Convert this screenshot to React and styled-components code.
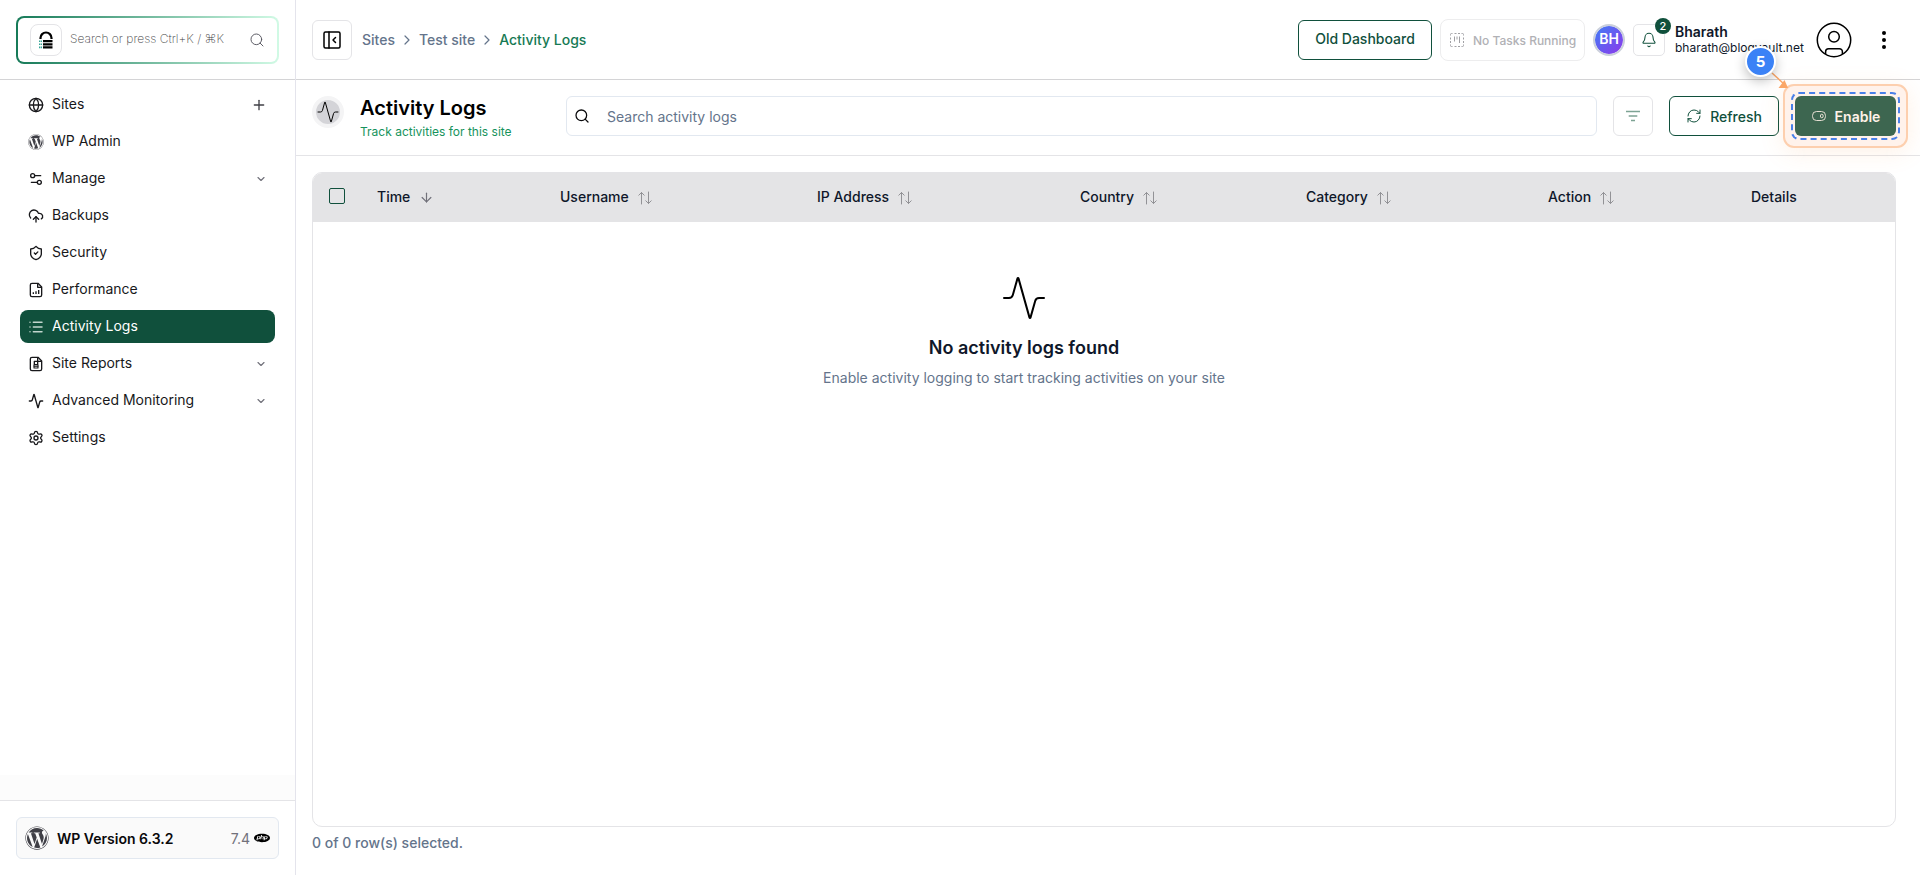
import React from "react";
import styled, { createGlobalStyle } from "styled-components";
import {
  Activity,
  ArrowDown,
  Bell,
  ChevronDown,
  ChevronRight,
  CloudUpload,
  Globe,
  List,
  Plus,
  RefreshCw,
  Search,
  Settings,
  Settings2,
} from "lucide-react";
import { FaWordpress } from "react-icons/fa";
import { SiPhp } from "react-icons/si";

const GlobalStyle = createGlobalStyle`
  * { box-sizing: border-box; }
  body {
    margin: 0;
    background: #fff;
    color: #09090b;
    font-family: Inter, "Liberation Sans", sans-serif;
    font-size: 14px;
  }
  button, input { font-family: inherit; }
  svg { display: block; flex-shrink: 0; }
`;

const menu = [
  { label: "Sites", icon: <Globe size={16} strokeWidth={2} />, end: "plus" },
  { label: "WP Admin", icon: <FaWordpress size={16} color="#3f3f46" /> },
  { label: "Manage", icon: <Settings2 size={16} strokeWidth={2} />, end: "chevron" },
  { label: "Backups", icon: <CloudUpload size={16} strokeWidth={2} /> },
  { label: "Security", icon: <ShieldIcon /> },
  { label: "Performance", icon: <ChartFileIcon /> },
  { label: "Activity Logs", icon: <List size={16} strokeWidth={2.2} color="#c3d6ce" />, active: true },
  { label: "Site Reports", icon: <ReportIcon />, end: "chevron" },
  { label: "Advanced Monitoring", icon: <Activity size={16} strokeWidth={2} />, end: "chevron" },
  { label: "Settings", icon: <GearIcon /> },
];

const columns = ["Username", "IP Address", "Country", "Category", "Action"];

function GearIcon() {
  return <Settings size={16} strokeWidth={2} />;
}

function ShieldIcon() {
  return (
    <svg width="16" height="16" viewBox="0 0 24 24" fill="none" stroke="currentColor" strokeWidth="2" strokeLinecap="round" strokeLinejoin="round">
      <path d="M20 13c0 5-3.500 7.500-8 9-4.500-1.500-8-4-8-9V6c3 0 6-1.500 8-4 2 2.500 5 4 8 4Z" />
      <path d="m9.500 12 1.800 1.800 3.500-3.500" />
    </svg>
  );
}

function ChartFileIcon() {
  return (
    <svg width="16" height="16" viewBox="0 0 24 24" fill="none" stroke="currentColor" strokeWidth="2" strokeLinejoin="round">
      <path d="M15 2H6a2.500 2.500 0 0 0-2.500 2.500v15A2.500 2.500 0 0 0 6 22h12a2.500 2.500 0 0 0 2.500-2.500V7.500Z" />
      <path d="M14.500 2v6h6M8 18v-2.500M12 18v-4M16 18v-6" />
    </svg>
  );
}

function ReportIcon() {
  return (
    <svg width="16" height="16" viewBox="0 0 24 24" fill="none" stroke="currentColor" strokeWidth="2" strokeLinejoin="round">
      <path d="M15 2H6a2.500 2.500 0 0 0-2.500 2.500v15A2.500 2.500 0 0 0 6 22h12a2.500 2.500 0 0 0 2.500-2.500V7.500Z" />
      <path d="M14.500 2v6h6" />
      <rect x="9.500" y="8" width="5" height="5" />
      <path d="M9 13v5h6v-5M8 15.500h8" strokeWidth="1.600" />
    </svg>
  );
}

function LockLogo() {
  return (
    <svg width="16" height="18" viewBox="0 0 16 18" fill="none">
      <path d="M2.500 8V7a5.500 5.500 0 0 1 11 0v1" stroke="#000" strokeWidth="2.200" />
      <path d="M5 10.200h9.500M5 13.300h9.500M5 16.400h9.500" stroke="#000" strokeWidth="2.200" />
      <path d="M1 10.200h3M1 13.300h3M1 16.400h3" stroke="#35a596" strokeWidth="1.600" strokeDasharray="1.500 .5" />
    </svg>
  );
}

function PanelIcon() {
  return (
    <svg width="18" height="18" viewBox="0 0 18 18" fill="none" stroke="#000" strokeWidth="1.500" strokeLinecap="round" strokeLinejoin="round">
      <rect x="1" y="1" width="16" height="16" rx="1.500" />
      <path d="M6 1v16M12.500 6.500 10 9l2.500 2.500" />
    </svg>
  );
}

function TasksIcon() {
  return (
    <svg width="14" height="14" viewBox="0 0 14 14" fill="none" stroke="#a0a0a4" strokeWidth="1">
      <path d="M.5 2.500V1.500a1 1 0 0 1 1-1h1M11.500.5h1a1 1 0 0 1 1 1v1M13.500 11.500v1a1 1 0 0 1-1 1h-1M2.500 13.500h-1a1 1 0 0 1-1-1v-1" />
      <path d="M4.500.5h2M8 .5h2M4.500 13.500h2M8 13.500h2M.5 4.500v2M.5 8v2M13.500 4.500v2M13.500 8v2" />
      <path d="M4.500 3.500v5M7 3.500v3M9.500 3.500v6.500" />
    </svg>
  );
}

function SortIcon() {
  return (
    <svg width="14" height="14" viewBox="0 0 14 14" fill="none" stroke="#929296" strokeWidth="1" strokeLinecap="round" strokeLinejoin="round">
      <path d="M3.500 13V1.500M.8 4.200l2.700-2.700 2.700 2.700M10.500 1v11.500M7.800 9.800l2.700 2.700 2.700-2.700" />
    </svg>
  );
}

function FilterIcon() {
  return (
    <svg width="14" height="12" viewBox="0 0 14 12" stroke="#7da394" strokeWidth="1.700">
      <path d="M0 1.500h14M2.700 6h8.600M5 10.500h4" />
    </svg>
  );
}

function AvatarIcon() {
  return (
    <svg width="36" height="36" viewBox="0 0 36 36" fill="none" stroke="#000" strokeWidth="1.500">
      <circle cx="18" cy="18" r="16.700" />
      <circle cx="18" cy="14.700" r="5.300" />
      <path d="M9.600 32v-2.300a3 3 0 0 1 3-3h10.800a3 3 0 0 1 3 3V32" />
    </svg>
  );
}

function ToggleIcon() {
  return (
    <svg width="14" height="10" viewBox="0 0 14 10" fill="none" stroke="#e6dfd3" strokeWidth="1">
      <rect x=".5" y=".5" width="13" height="9" rx="4" />
      <ellipse cx="9.800" cy="5" rx="1.400" ry="1.800" />
    </svg>
  );
}

const App = () => {
  return (
    <Page>
      <GlobalStyle />
      <Sidebar>
        <SidebarTop>
          <QuickSearch>
            <LogoBox><LockLogo /></LogoBox>
            <QuickText>Search or press Ctrl+K / ⌘K</QuickText>
            <Search size={16} strokeWidth={1.4} color="#52525b" />
          </QuickSearch>
        </SidebarTop>
        <Menu>
          {menu.map((item) => (
            <MenuItem key={item.label} $active={item.active}>
              {item.icon}
              <MenuLabel>{item.label}</MenuLabel>
              {item.end === "plus" && <Plus size={16} strokeWidth={2} color="#3f3f46" />}
              {item.end === "chevron" && <ChevronDown size={12} strokeWidth={2.3} color="#71717a" />}
            </MenuItem>
          ))}
        </Menu>
        <MenuFade />
        <SidebarFooter>
          <VersionCard>
            <FaWordpress size={24} color="#3f3f46" />
            <VersionText>WP Version 6.3.2</VersionText>
            <PhpText>7.4</PhpText>
            <SiPhp size={16} color="#000" />
          </VersionCard>
        </SidebarFooter>
      </Sidebar>

      <Main>
        <TopBar>
          <IconButton><PanelIcon /></IconButton>
          <Crumbs>
            <Crumb>Sites</Crumb>
            <ChevronRight size={16} strokeWidth={1.8} />
            <Crumb>Test site</Crumb>
            <ChevronRight size={16} strokeWidth={1.8} />
            <Crumb $current>Activity Logs</Crumb>
          </Crumbs>
          <OutlineButton $width="134px" $lift>Old Dashboard</OutlineButton>
          <TasksButton><TasksIcon /><TasksText>No Tasks Running</TasksText></TasksButton>
          <Initials>BH</Initials>
          <BellButton>
            <Bell size={16} strokeWidth={1.6} />
            <BellBadge>2</BellBadge>
          </BellButton>
          <User>
            <UserName>Bharath</UserName>
            <UserMail>bharath@blogvault.net</UserMail>
          </User>
          <AvatarIcon />
          <Dots><i /><i /><i /></Dots>
        </TopBar>

        <TitleBar>
          <TitleIcon><Activity size={24} strokeWidth={1} /></TitleIcon>
          <TitleText>
            <Title>Activity Logs</Title>
            <Subtitle>Track activities for this site</Subtitle>
          </TitleText>
          <SearchField>
            <Search size={16} strokeWidth={1.9} />
            <SearchInput placeholder="Search activity logs" />
          </SearchField>
          <IconButton><FilterIcon /></IconButton>
          <OutlineButton $width="110px">
            <RefreshCw size={16} strokeWidth={1.5} />
            <ButtonText>Refresh</ButtonText>
          </OutlineButton>
          <EnableSpot>
            <Halo />
            <Dashes />
            <EnableButton><ToggleIcon /><ButtonText>Enable</ButtonText></EnableButton>
            <Pointer width="20" height="20" viewBox="0 0 20 20">
              <path d="M1 1l12 11" stroke="#fba768" strokeWidth="1.500" />
              <path d="M17 16H7.500L13.500 8z" fill="#fba768" />
            </Pointer>
            <Step>5</Step>
          </EnableSpot>
        </TitleBar>

        <Content>
          <Table>
            <HeadRow>
              <Checkbox />
              <HeadCell><span>Time</span><ArrowDown size={15} strokeWidth={1.9} color="#71717a" /></HeadCell>
              {columns.map((name) => (
                <HeadCell key={name}><span>{name}</span><SortIcon /></HeadCell>
              ))}
              <HeadCell><span>Details</span></HeadCell>
            </HeadRow>
            <Empty>
              <Activity size={48} strokeWidth={1} color="#000" />
              <EmptyTitle>No activity logs found</EmptyTitle>
              <EmptyText>Enable activity logging to start tracking activities on your site</EmptyText>
            </Empty>
          </Table>
          <RowCount>0 of 0 row(s) selected.</RowCount>
        </Content>
      </Main>
    </Page>
  );
};

const Page = styled.div`
  display: flex;
  height: 875px;
  overflow: hidden;
`;

const Sidebar = styled.aside`
  display: flex;
  flex-direction: column;
  width: 296px;
  flex-shrink: 0;
  border-right: 1px solid #e4e4ec;
`;

const SidebarTop = styled.div`
  height: 80px;
  padding: 16px;
  border-bottom: 1px solid #d4d4d6;
`;

const QuickSearch = styled.div`
  display: flex;
  align-items: center;
  height: 48px;
  padding: 0 12px;
  border: 2px solid transparent;
  border-radius: 8px;
  background: linear-gradient(#fff, #fff) padding-box,
    linear-gradient(90deg, #167a58, #d1fae5) border-box;
`;

const LogoBox = styled.div`
  display: flex;
  align-items: center;
  justify-content: center;
  width: 32px;
  height: 32px;
  border: 1px solid #e4e4e7;
  border-radius: 8px;
`;

const QuickText = styled.span`
  flex: 1;
  margin-left: 8px;
  padding-bottom: 3px;
  font-size: 12px;
  font-weight: 200;
  color: #3f3f46;
  white-space: nowrap;
`;

const Menu = styled.nav`
  display: flex;
  flex-direction: column;
  gap: 4px;
  padding: 8px 20px 0;
`;

const MenuItem = styled.a`
  display: flex;
  align-items: center;
  height: 33px;
  padding: 0 8px;
  border-radius: 8px;
  color: ${(p) => (p.$active ? "#fff" : "#18181b")};
  background: ${(p) => (p.$active ? "#10503c" : "transparent")};
`;

const MenuLabel = styled.span`
  flex: 1;
  margin-left: 8px;
  padding-bottom: 2px;
`;

const MenuFade = styled.div`
  height: 25px;
  margin-top: auto;
  background: #fcfcfc;
`;

const SidebarFooter = styled.div`
  height: 75px;
  padding: 16px;
  border-top: 1px solid #e4e4e7;
`;

const VersionCard = styled.div`
  display: flex;
  align-items: center;
  height: 42px;
  padding: 0 8px;
  border: 1px solid #e2e8f0;
  border-radius: 6px;
  background: #fafafa;
`;

const VersionText = styled.span`
  flex: 1;
  margin-left: 8px;
  font-weight: 600;
`;

const PhpText = styled.span`
  margin-right: 4px;
  color: #71717a;
`;

const Main = styled.main`
  display: flex;
  flex-direction: column;
  flex: 1;
  min-width: 0;
`;

const TopBar = styled.header`
  display: flex;
  align-items: center;
  height: 80px;
  padding: 0 28px 0 16px;
  border-bottom: 1px solid #d4d4d6;
`;

const IconButton = styled.button`
  display: flex;
  align-items: center;
  justify-content: center;
  width: 40px;
  height: 40px;
  flex-shrink: 0;
  padding: 0;
  background: #fff;
  border: 1px solid #e4e4e7;
  border-radius: 6px;
`;

const Crumbs = styled.div`
  display: flex;
  align-items: center;
  gap: 4px;
  flex: 1;
  margin-left: 10px;
  color: #64748b;
`;

const Crumb = styled.span`
  font-weight: 500;
  color: ${(p) => (p.$current ? "#167a54" : "#64748b")};
`;

const OutlineButton = styled.button`
  display: flex;
  align-items: center;
  justify-content: center;
  gap: 8px;
  width: ${(p) => p.$width};
  height: 40px;
  padding: ${(p) => (p.$lift ? "0 0 2px" : "0")};
  border: 1px solid #10503c;
  border-radius: 6px;
  background: #fff;
  color: #10503c;
  font-size: 14px;
  font-weight: 500;
`;

const ButtonText = styled.span`
  padding-top: 1px;
`;

const TasksButton = styled.div`
  display: flex;
  align-items: center;
  gap: 9px;
  width: 145px;
  height: 42px;
  margin-left: 8px;
  padding-left: 9px;
  border: 1px solid #ededee;
  border-radius: 8px;
  color: #b1b1b5;
  font-size: 12px;
  font-weight: 500;
  white-space: nowrap;
`;

const TasksText = styled.span`
  padding-top: 2px;
`;

const Initials = styled.div`
  display: flex;
  align-items: center;
  justify-content: center;
  width: 32px;
  height: 32px;
  margin-left: 8px;
  padding-bottom: 2px;
  border: 2px solid #cbd0dc;
  border-radius: 50%;
  background: linear-gradient(135deg, #3b82f6, #9333ea) border-box;
  background-clip: padding-box;
  color: #fff;
  font-weight: 600;
`;

const BellButton = styled.div`
  position: relative;
  display: flex;
  align-items: center;
  justify-content: center;
  width: 32px;
  height: 32px;
  margin-left: 8px;
  border: 1px solid #e4e4e7;
  border-radius: 5px;
  color: #10503c;
`;

const BellBadge = styled.span`
  position: absolute;
  top: -7px;
  right: -7px;
  width: 16px;
  height: 16px;
  border-radius: 50%;
  background: #10503c;
  color: #fff;
  font-size: 11px;
  font-weight: 500;
  line-height: 16px;
  text-align: center;
`;

const User = styled.div`
  width: 129px;
  margin: 0 12px 0 10px;
  color: #0f172a;
  white-space: nowrap;
`;

const UserName = styled.div`
  font-weight: 600;
  line-height: 16px;
`;

const UserMail = styled.div`
  font-size: 12px;
  line-height: 16px;
`;

const Dots = styled.div`
  display: flex;
  flex-direction: column;
  align-items: center;
  gap: 3px;
  width: 16px;
  margin-left: 24px;
  i {
    width: 4px;
    height: 4px;
    border-radius: 50%;
    background: #000;
  }
`;

const TitleBar = styled.div`
  display: flex;
  align-items: flex-start;
  height: 76px;
  padding: 16px 24px 0 16px;
  border-bottom: 1px solid #e4e4e7;
`;

const TitleIcon = styled.div`
  display: flex;
  align-items: center;
  justify-content: center;
  width: 32px;
  height: 32px;
  border: 4px solid #f4f4f5;
  border-radius: 50%;
  background: #d4d4d8;
  color: #000;
`;

const TitleText = styled.div`
  width: 206px;
  margin-left: 16px;
`;

const Title = styled.h1`
  margin: 0;
  font-size: 20px;
  font-weight: 600;
  line-height: 24px;
  color: #000;
`;

const Subtitle = styled.div`
  margin-top: 4px;
  font-size: 12px;
  line-height: 16px;
  color: #16935c;
`;

const SearchField = styled.label`
  display: flex;
  align-items: center;
  flex: 1;
  height: 40px;
  margin-right: 16px;
  padding: 0 0 1px 7px;
  border: 1px solid #e2e8f0;
  border-radius: 6px;
  & + ${IconButton} {
    margin-right: 16px;
  }
`;

const SearchInput = styled.input`
  flex: 1;
  margin-left: 17px;
  padding: 1px 0 0;
  border: 0;
  outline: 0;
  background: none;
  font-size: 14px;
  &::placeholder {
    color: #64748b;
    opacity: 1;
  }
`;

const EnableSpot = styled.div`
  position: relative;
  width: 101px;
  margin-left: 16px;
`;

const Halo = styled.div`
  position: absolute;
  top: -12px;
  left: -12px;
  width: 125px;
  height: 64px;
  border: 2px solid #fdcfae;
  border-radius: 11px;
  background: #fff2eb;
  box-shadow: 0 4px 24px rgba(251, 146, 60, 0.13);
`;

const Dashes = styled.div`
  position: absolute;
  top: -4px;
  left: -4px;
  width: 109px;
  height: 48px;
  border: 2px dashed #4a80e8;
  border-radius: 8px;
`;

const EnableButton = styled.button`
  position: relative;
  display: flex;
  align-items: center;
  justify-content: center;
  gap: 9px;
  width: 101px;
  height: 40px;
  padding: 0 0 0 1px;
  border: 0;
  border-radius: 6px;
  background: #3d6650;
  color: #fff2e8;
  font-size: 14px;
  font-weight: 600;
`;

const Pointer = styled.svg`
  position: absolute;
  top: -24px;
  left: -24px;
`;

const Step = styled.div`
  position: absolute;
  top: -50px;
  left: -50px;
  width: 31px;
  height: 31px;
  border: 2px solid #fff;
  border-radius: 50%;
  background: #3b82f6;
  box-shadow: 0 4px 12px rgba(0, 0, 0, 0.25);
  color: #fff;
  font-size: 15px;
  font-weight: 700;
  line-height: 27px;
  text-align: center;
`;

const Content = styled.section`
  display: flex;
  flex-direction: column;
  flex: 1;
  padding: 16px 24px 0 16px;
`;

const Table = styled.div`
  height: 655px;
  border: 1px solid #e4e4e7;
  border-radius: 10px;
  overflow: hidden;
`;

const HeadRow = styled.div`
  display: grid;
  grid-template-columns: 48px 183px 257px 263px 226px 242px 203px 1fr;
  align-items: center;
  height: 49px;
  padding-left: 16px;
  background: #e4e4e6;
`;

const HeadCell = styled.div`
  display: flex;
  align-items: center;
  gap: 9px;
  color: #0f172a;
  font-weight: 500;
  span {
    padding-bottom: 2px;
  }
`;

const Checkbox = styled.div`
  width: 16px;
  height: 16px;
  margin-bottom: 4px;
  border: 1px solid #10503c;
  border-radius: 2px;
`;

const Empty = styled.div`
  display: flex;
  flex-direction: column;
  align-items: center;
  width: 1422px;
  padding-top: 52px;
`;

const EmptyTitle = styled.h2`
  margin: 12px 0 0;
  font-size: 18px;
  font-weight: 600;
  line-height: 28px;
  color: #0f172a;
`;

const EmptyText = styled.p`
  margin: 6px 0 0;
  line-height: 20px;
  color: #64748b;
`;

const RowCount = styled.div`
  margin-top: 6px;
  line-height: 20px;
  font-weight: 500;
  color: #64748b;
`;

export default App;
